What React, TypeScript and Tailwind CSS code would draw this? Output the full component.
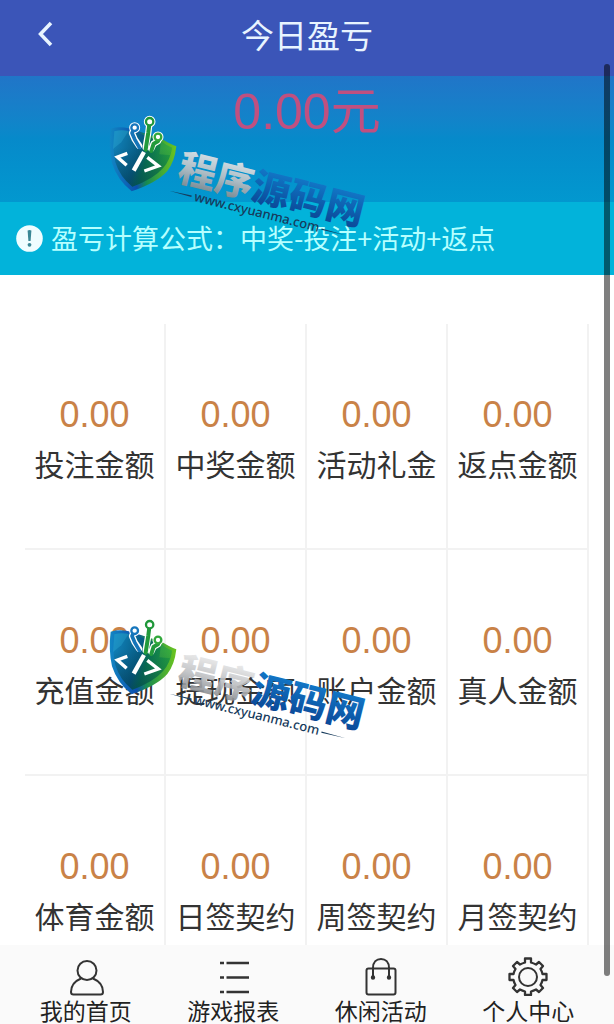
import type { ReactNode } from 'react';

interface Stat {
  label: string;
  value: string;
}

const stats: Stat[] = [
  { label: '投注金额', value: '0.00' },
  { label: '中奖金额', value: '0.00' },
  { label: '活动礼金', value: '0.00' },
  { label: '返点金额', value: '0.00' },
  { label: '充值金额', value: '0.00' },
  { label: '提现金额', value: '0.00' },
  { label: '账户金额', value: '0.00' },
  { label: '真人金额', value: '0.00' },
  { label: '体育金额', value: '0.00' },
  { label: '日签契约', value: '0.00' },
  { label: '周签契约', value: '0.00' },
  { label: '月签契约', value: '0.00' },
];

function NavIcon({ children }: { children: ReactNode }) {
  return (
    <svg
      viewBox="0 0 40 40"
      className="w-10 h-10"
      fill="none"
      stroke="#333"
      strokeWidth="2"
      strokeLinejoin="round"
      strokeLinecap="round"
      aria-hidden="true"
    >
      {children}
    </svg>
  );
}

const navItems = [
  {
    label: '我的首页',
    icon: (
      <NavIcon>
        <circle cx="21" cy="14.500" r="9.500" />
        <path d="M15 22.500C9 25 5 29.500 5 36Q5 38.500 7.500 38.500H34.500Q37 38.500 37 36C37 29.500 33 25 27 22.500" />
      </NavIcon>
    ),
  },
  {
    label: '游戏报表',
    icon: (
      <NavIcon>
        <path strokeWidth="2.400" strokeLinecap="butt" d="M7 7h4M13.500 7H36M7 21.500h4M13.500 21.500H36M7 36h4M13.500 36H36" />
      </NavIcon>
    ),
  },
  {
    label: '休闲活动',
    icon: (
      <NavIcon>
        <rect x="5.500" y="12.500" width="29" height="26" rx="2" />
        <path d="M12 21V12C12 6 15.500 3 20 3S28 6 28 12V21" />
        <circle cx="12" cy="21.500" r="1.200" fill="#333" />
        <circle cx="28" cy="21.500" r="1.200" fill="#333" />
      </NavIcon>
    ),
  },
  {
    label: '个人中心',
    icon: (
      <NavIcon>
        <path
          strokeWidth="2.300"
          d="M17 2.500H23V6.500Q25.500 7.300 28 8.500L31 6L35 10L32.500 13Q34 15.500 34.500 18H38.500V24H34.500Q34 26.500 32.500 29L35 32L31 36L28 33.500Q25.500 34.800 23 35.500V39H17V35.500Q14.500 34.800 12 33.500L9 36L5 32L7.500 29Q6 26.500 5.500 24H1.500V18H5.500Q6 15.500 7.500 13L5 10L9 6L12 8.500Q14.500 7.300 17 6.500Z"
        />
        <circle cx="20" cy="21" r="9" />
      </NavIcon>
    ),
  },
];

function SiteMark({ id }: { id: string }) {
  return (
    <svg viewBox="0 0 270 140" className="w-[270px] h-[140px]" role="img" aria-label="程序源码网">
      <defs>
        <linearGradient id={`${id}-rim`} x1="0" y1="0" x2="1" y2="0">
          <stop offset="0" stopColor="#1287c4" />
          <stop offset="0.400" stopColor="#0b4fae" />
          <stop offset="0.550" stopColor="#178a52" />
          <stop offset="1" stopColor="#6cc51e" />
        </linearGradient>
        <linearGradient id={`${id}-core`} x1="0" y1="0.200" x2="1" y2="0.500">
          <stop offset="0" stopColor="#1182bb" />
          <stop offset="0.450" stopColor="#075c83" />
          <stop offset="0.600" stopColor="#087353" />
          <stop offset="1" stopColor="#28a83b" />
        </linearGradient>
        <linearGradient id={`${id}-shade`} x1="0" y1="0" x2="0" y2="1">
          <stop offset="0.300" stopColor="#02344b" stopOpacity="0" />
          <stop offset="1" stopColor="#02344b" stopOpacity="0.500" />
        </linearGradient>
        <linearGradient id={`${id}-silver`} x1="0" y1="0" x2="0" y2="1">
          <stop offset="0.200" stopColor="#e8e8e8" />
          <stop offset="0.550" stopColor="#bfc1c4" />
          <stop offset="0.900" stopColor="#85888c" />
        </linearGradient>
        <linearGradient id={`${id}-blue`} x1="0" y1="0" x2="0" y2="1">
          <stop offset="0.200" stopColor="#1278c8" />
          <stop offset="0.900" stopColor="#0a4796" />
        </linearGradient>
      </defs>

      {/* Shield */}
      <g transform="scale(0.3333)" strokeLinecap="round" strokeLinejoin="round">
        <path
          fill={`url(#${id}-rim)`}
          d="M32 71Q58 63 86 70L125 82L185 101Q210 117 229 124Q224 170 202 198Q171 233 95 259Q52 225 36 175Q25 125 32 71Z"
        />
        <path
          fill={`url(#${id}-core)`}
          d="M43 79Q63 73 86 78L125 88L183 108Q200 121 216 128Q211 164 190 188Q162 221 97 245Q60 216 46 171Q36 122 43 79Z"
        />
        <path fill="#36b7df" opacity="0.300" d="M43 79Q63 73 86 78L64 112L39 132Z" />
        <path fill="#7bd837" opacity="0.250" d="M183 108L216 128L211 151L178 148Z" />
        <path
          fill={`url(#${id}-shade)`}
          d="M43 79L125 88L216 128Q211 164 190 188Q162 221 97 245Q60 216 46 171Q36 122 43 79Z"
        />
        <g fill="none" stroke="#fff" strokeWidth="19">
          <path d="M104 67L96 84L104 103L117 122" />
          <path d="M149 50L145 82L137 127" />
          <path d="M174 96L174 109L161 116L154 131" />
        </g>
        <g fill="#fff" stroke="#fff" strokeWidth="11">
          <circle cx="104" cy="68" r="11" />
          <circle cx="149" cy="50" r="12" />
          <circle cx="174" cy="96" r="11" />
        </g>
        <path fill="none" stroke="#1474b8" strokeWidth="11" d="M104 67L96 84L104 103L118 127" />
        <g fill="none" stroke="#229a3b" strokeWidth="12">
          <path d="M149 50L145 82L137 134" />
          <path d="M174 96L174 109L161 116L154 138" />
        </g>
        <g fill="#fff" strokeWidth="7">
          <circle cx="104" cy="68" r="10" stroke="#1676bd" />
          <circle cx="149" cy="50" r="11" stroke="#20983a" />
          <circle cx="174" cy="96" r="10" stroke="#32a83b" />
        </g>
        <g fill="none" stroke="#fff" strokeWidth="10" strokeLinecap="butt" strokeLinejoin="miter">
          <path d="M82 145L52 156L80 181" />
          <path strokeWidth="13" d="M132 141L101 197" />
          <path d="M142 157L175 183L133 198" />
        </g>
      </g>

      {/* Name and address */}
      <g transform="translate(76 75) rotate(14)">
        <text
          x="0"
          y="0"
          fontSize="38"
          className="font-['Noto_Sans_CJK_SC',sans-serif] font-black"
          fill={`url(#${id}-silver)`}
          opacity="0.900"
        >
          程序
        </text>
        <text
          x="76"
          y="0"
          fontSize="38"
          className="font-['Noto_Sans_CJK_SC',sans-serif] font-black"
          fill={`url(#${id}-blue)`}
        >
          源码网
        </text>
        <text x="22" y="16" fontSize="13" className="font-['Noto_Sans',sans-serif] font-medium" fill="#173b5c">
          www.cxyuanma.com
        </text>
        <path fill="#173b5c" d="M-4 12L19 11.300V12.700ZM153 11.800L178 12.500L153 13.200Z" />
      </g>
    </svg>
  );
}

export default function App() {
  return (
    <div className="relative flex flex-col h-screen overflow-hidden bg-white font-['Noto_Sans_CJK_SC',sans-serif]">
      <header className="relative shrink-0 flex items-center justify-center h-19 pb-2 bg-[#3b55b8] text-[#e8f4ff]">
        <button type="button" aria-label="返回" className="absolute left-8 top-4 p-1">
          <svg viewBox="0 0 20 28" className="w-5 h-7" fill="none" stroke="#e8f4ff" strokeWidth="3.500" aria-hidden="true">
            <path d="M15 3L4.500 14L15 25" />
          </svg>
        </button>
        <h1 className="text-[33px] leading-12">今日盈亏</h1>
      </header>

      <main className="flex-1 min-h-0 overflow-hidden">
        <section className="h-[126px] bg-linear-to-b from-[#2075c8] via-[#068aca] to-[#0298cf] text-center">
          <p className="font-['Liberation_Sans','Noto_Sans_CJK_SC',sans-serif] text-[50px] leading-18 text-[#c05080]">
            0.00元
          </p>
        </section>
        <section className="flex items-center gap-2 h-[73px] px-4 bg-[#02b3da] text-[#b5ffff]">
          <svg viewBox="0 0 27 27" className="w-[27px] h-[27px]" aria-hidden="true">
            <circle cx="13.500" cy="13.500" r="13.300" fill="#effdff" />
            <path d="M11.600 5.500Q13.500 4.500 15.400 5.500L14.600 16H12.400Z" fill="#3a8795" />
            <circle cx="13.500" cy="19.800" r="1.900" fill="#3a8795" />
          </svg>
          <p className="text-[27px] whitespace-nowrap">盈亏计算公式：中奖-投注+活动+返点</p>
        </section>

        {/* Stats */}
        <dl className="grid grid-cols-4 mt-[49px] mx-[25px]">
          {stats.map((stat) => (
            <div
              key={stat.label}
              className="flex flex-col-reverse justify-center h-[226px] pt-1.5 text-center border-r-2 border-b-2 border-[#f2f2f2]"
            >
              <dt className="text-[30px] leading-12 whitespace-nowrap text-[#333]">{stat.label}</dt>
              <dd className="font-['Liberation_Sans',sans-serif] text-[36px] leading-12 text-[#c98247]">
                {stat.value}
              </dd>
            </div>
          ))}
        </dl>
      </main>

      <nav className="shrink-0 grid grid-cols-4 h-[79px] px-3 pt-[11px] bg-[#fafafa]">
        {navItems.map((item) => (
          <a key={item.label} href="#" className="flex flex-col items-center text-[#222]">
            {item.icon}
            <span className="text-[23px] leading-7 whitespace-nowrap">{item.label}</span>
          </a>
        ))}
      </nav>

      {/* Watermarks */}
      <div className="absolute left-[100px] top-[105px] pointer-events-none">
        <SiteMark id="mark-top" />
      </div>
      <div className="absolute left-[100px] top-[608px] pointer-events-none">
        <SiteMark id="mark-bottom" />
      </div>

      {/* Scroll thumb */}
      <div className="absolute right-1 top-16 bottom-12 w-[6px] rounded-full bg-black/50 pointer-events-none" />
    </div>
  );
}
